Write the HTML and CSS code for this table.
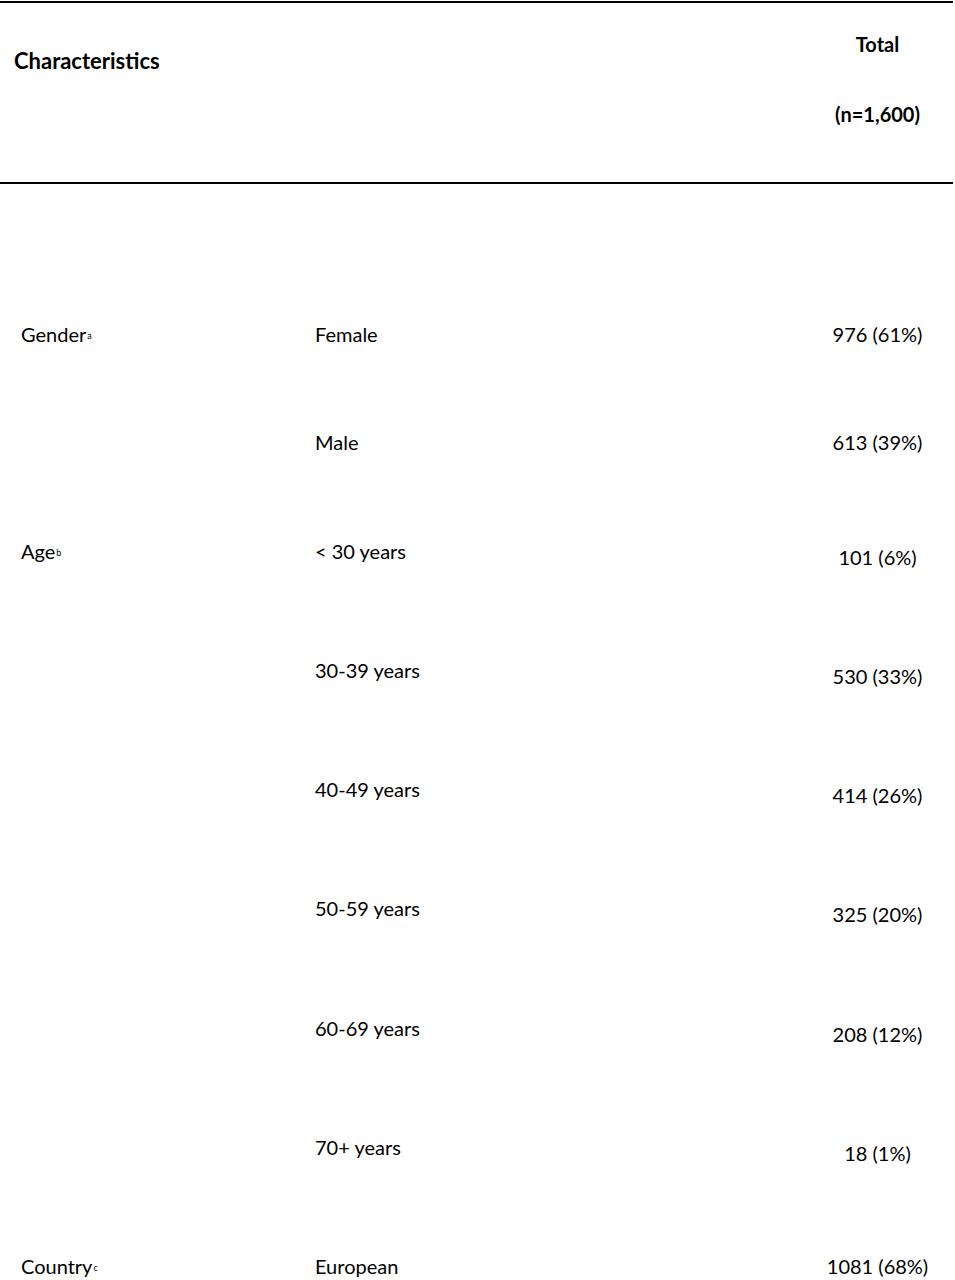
FILE: index.html
```html
<!DOCTYPE html>
<html>
<head>
<meta charset="utf-8">
<link rel="stylesheet" href="styles.css">
</head>
<body>
<div class="table">
  <div class="head">
    <div class="h-char">Characteristics</div>
    <div class="h-total">
      <div class="h-line1">Total</div>
      <div class="h-line2">(n=1,600)</div>
    </div>
  </div>
  <div class="spacer"></div>
  <div class="row r108"><div class="c1">Gender<sup class="fn">a</sup></div><div class="c2">Female</div><div class="c3">976 (61%)</div></div>
  <div class="row r109"><div class="c1"></div><div class="c2">Male</div><div class="c3">613 (39%)</div></div>
  <div class="row r119"><div class="c1">Age<sup class="fn">b</sup></div><div class="c2">&lt; 30 years</div><div class="c3 off">101 (6%)</div></div>
  <div class="row r119"><div class="c1"></div><div class="c2">30-39 years</div><div class="c3 off">530 (33%)</div></div>
  <div class="row r119"><div class="c1"></div><div class="c2">40-49 years</div><div class="c3 off">414 (26%)</div></div>
  <div class="row r120"><div class="c1"></div><div class="c2">50-59 years</div><div class="c3 off">325 (20%)</div></div>
  <div class="row r119"><div class="c1"></div><div class="c2">60-69 years</div><div class="c3 off">208 (12%)</div></div>
  <div class="row r119"><div class="c1"></div><div class="c2">70+ years</div><div class="c3 off">18 (1%)</div></div>
  <div class="row rlast"><div class="c1">Country<sup class="fn">c</sup></div><div class="c2">European</div><div class="c3">1081 (68%)</div></div>
</div>
</body>
</html>
```
FILE: styles.css
```css
html, body {
  margin: 0;
  padding: 0;
  background: #fff;
}
body {
  font-family: Lato, "Open Sans", sans-serif;
  color: #000;
  font-size: 20px;
  height: 1280px;
  overflow: hidden;
}
.table {
  width: 955px;
}
.head {
  height: 179px;
  border-top: 2px solid #000;
  border-bottom: 2px solid #000;
  margin-top: 1px;
  margin-right: 2px;
  display: grid;
  grid-template-columns: 800px 153px;
  font-weight: bold;
}
.h-char {
  padding-left: 14px;
  padding-top: 45px;
  line-height: 26px;
  font-size: 22px;
}
.h-total {
  text-align: center;
  line-height: 26px;
  padding-top: 28px;
  padding-left: 2px;
}
.h-line2 {
  margin-top: 44px;
}
.spacer {
  height: 137px;
}
.row {
  display: grid;
  grid-template-columns: 315px 485px 155px;
  line-height: 26px;
}
.r108 { height: 108px; }
.r109 { height: 109px; }
.r119 { height: 119px; }
.r120 { height: 120px; }
.rlast { height: 26px; }
.c1 {
  padding-left: 21px;
}
.c3 {
  text-align: center;
}
.c3.off {
  padding-top: 6px;
}
.fn {
  font-size: 9px;
  vertical-align: 3px;
  line-height: 0;
  margin-left: 1px;
}
```
